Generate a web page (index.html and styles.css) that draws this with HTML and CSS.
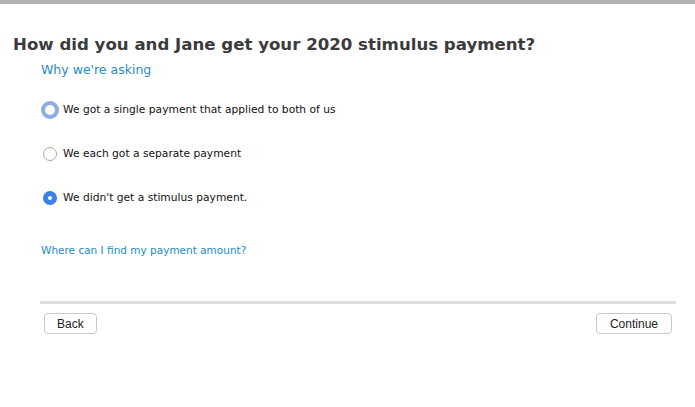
FILE: index.html
```html
<!DOCTYPE html>
<html lang="en">
<head>
    <meta charset="UTF-8">
    <meta name="viewport" content="width=device-width, initial-scale=1.0">
    <title>Stimulus Payment</title>
    <link rel="stylesheet" href="styles.css">
</head>
<body>
    <div class="topbar"></div>
    <div class="page">
        <h2>How did you and Jane get your 2020 stimulus payment?</h2>
        <div class="content">
            <a class="ask" href="#">Why we're asking</a>

            <div class="options">
                <label class="option">
                    <span class="radio focus"></span>
                    We got a single payment that applied to both of us
                </label>
                <label class="option">
                    <span class="radio"></span>
                    We each got a separate payment
                </label>
                <label class="option">
                    <span class="radio checked"></span>
                    We didn't get a stimulus payment.
                </label>
            </div>

            <a class="find" href="#">Where can I find my payment amount?</a>
        </div>

        <div class="footer">
            <button>Back</button>
            <button>Continue</button>
        </div>
    </div>
</body>
</html>
```

FILE: styles.css
```css
body {
    font-family: "DejaVu Sans", Verdana, sans-serif;
    margin: 0;
    background-color: #fff;
    color: #111;
}
.topbar {
    height: 4px;
    background-color: #b3b3b3;
}
.page {
    padding: 0 19px 0 13px;
}
h2 {
    margin: 30px 0 0;
    font-size: 16.6px;
    font-weight: bold;
    color: #3b3b3b;
    line-height: 22px;
}
.content {
    padding-left: 28px;
}
a {
    color: #1d8cc6;
    text-decoration: none;
}
.ask {
    display: block;
    margin-top: 6px;
    font-size: 12.5px;
    line-height: 16px;
}
.options {
    margin-top: 23px;
    display: flex;
    flex-direction: column;
    gap: 26px;
}
.option {
    display: flex;
    align-items: center;
    gap: 6px;
    font-size: 10.7px;
    line-height: 18px;
    padding-left: 2px;
}
.radio {
    width: 14px;
    height: 14px;
    border: 1px solid #aaa;
    border-radius: 50%;
    background: #fff;
    box-sizing: border-box;
}
.radio.focus {
    width: 18px;
    height: 18px;
    margin-left: -2px;
    margin-right: -2px;
    border: 4px solid #8eabe2;
}
.radio.checked {
    border: 5px solid #3b82e6;
    background: #fff;
}
.find {
    display: block;
    margin-top: 35px;
    font-size: 10.5px;
    line-height: 16px;
}
.footer {
    margin: 43px 0 0 27px;
    padding: 9px 4px 0;
    border-top: 3px solid #ddd;
    display: flex;
    justify-content: space-between;
}
button {
    font-family: "Liberation Sans", Arial, sans-serif;
    font-size: 12px;
    color: #222;
    background: #fff;
    border: 1px solid #c8c8c8;
    border-radius: 4px;
    height: 21px;
    padding: 0 12px;
}
button + button {
    padding: 0 13px;
}
```
